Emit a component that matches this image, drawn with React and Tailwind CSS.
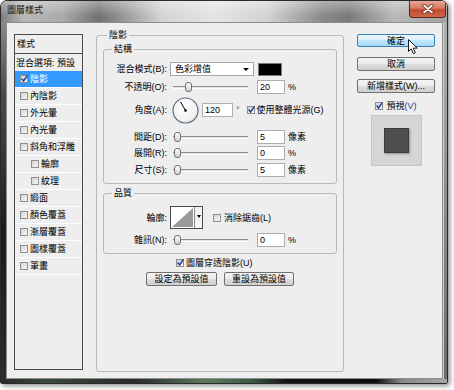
import React from 'react';

const Check = ({ checked }) => (
  <span className="relative inline-block w-[8px] h-[8px] shrink-0 border border-[#8f8f8f] bg-[linear-gradient(135deg,#d2d2d2,#f8f8f8)]">
    {checked && (
      <svg className="absolute left-[-1px] top-[-2px]" width="9" height="9" viewBox="0 0 9 9">
        <path d="M1.6 4.6 L3.6 7 L7.4 1.4" fill="none" stroke="#22409a" strokeWidth="1.5" />
      </svg>
    )}
  </span>
);

const Slider = ({ pos }) => (
  <div className="relative w-[75px] h-[10px] shrink-0 flex items-center">
    <div className="w-full h-[3px] border-t border-[#8e8e8e] border-b border-b-white bg-[#e2e2e2]" />
    <div
      className="absolute top-0 w-[7px] h-[10px] rounded-[3px] border border-[#6f6f6f] bg-[linear-gradient(#ffffff,#cfcfcf)]"
      style={{ left: pos }}
    />
  </div>
);

const Field = ({ value, w = 'w-[28px]' }) => (
  <div className={`${w} h-[14px] shrink-0 bg-white border border-[#abadb3] pl-[2px] text-[9px] leading-[12px]`}>
    {value}
  </div>
);

const Label = ({ children }) => (
  <div className="w-[63px] shrink-0 text-right text-[9px] leading-[12px]">{children}</div>
);

const SliderRow = ({ label, pos, value, unit, cls }) => (
  <div className={`flex items-center h-[16px] ${cls}`}>
    <Label>{label}</Label>
    <div className="ml-[6px]">
      <Slider pos={pos} />
    </div>
    <div className="ml-[9px]">
      <Field value={value} />
    </div>
    <div className="ml-[3px] text-[9px] leading-[12px]">{unit}</div>
  </div>
);

const Btn = ({ children, cls }) => (
  <div
    className={`h-[14px] flex items-center justify-center border border-[#707070] rounded-[2px] bg-[linear-gradient(#f4f4f4_0%,#ebebeb_50%,#dddddd_50%,#cfcfcf_100%)] text-[9px] leading-[12px] ${cls}`}
  >
    {children}
  </div>
);

const items = [
  { t: '陰影', c: true, sel: true },
  { t: '內陰影' },
  { t: '外光暈' },
  { t: '內光暈' },
  { t: '斜角和浮雕' },
  { t: '輪廓', sub: true },
  { t: '紋理', sub: true },
  { t: '緞面' },
  { t: '顏色覆蓋' },
  { t: '漸層覆蓋' },
  { t: '圖樣覆蓋' },
  { t: '筆畫' },
];

export default function App() {
  return (
    <div className="w-[454px] h-[390px] bg-white text-black font-['Liberation_Sans','Noto_Sans_CJK_TC',sans-serif]">
      <div className="w-[448px] h-[384px] flex flex-col rounded-t-[7px] rounded-b-[2px] border border-[#2b2b2b] shadow-[2px_2px_5px_rgba(0,0,0,0.45)] overflow-hidden">
        {/* title bar */}
        <div className="h-[21px] shrink-0 flex items-start justify-between pr-[1px] bg-[linear-gradient(180deg,rgba(255,255,255,0.35),rgba(255,255,255,0)_70%),linear-gradient(90deg,#7d7d7d_0%,#b8b8b8_5%,#a8a8a8_14%,#727272_22%,#9c9c9c_28%,#d4d4d4_36%,#e4e4e4_48%,#d2d2d2_60%,#8a8a8a_72%,#7a7a7a_78%,#b8b8b8_88%,#a2a2a2_100%)]">
          <div className="pl-[6px] pt-[3px] text-[9px] leading-[12px] text-[#141414]">圖層樣式</div>
          <div className="w-[37px] h-[17px] rounded-b-[4px] border border-t-0 border-[#5e2216] bg-[linear-gradient(#e9a895_0%,#d87a63_45%,#c4472b_55%,#d26a4c_100%)] flex items-center justify-center">
            <svg width="12" height="10" viewBox="0 0 12 10">
              <path d="M2 1.5 L10 8.5 M10 1.5 L2 8.5" stroke="#5a2013" strokeWidth="3.4" strokeLinecap="round" />
              <path d="M2 1.5 L10 8.5 M10 1.5 L2 8.5" stroke="#ffffff" strokeWidth="1.8" strokeLinecap="round" />
            </svg>
          </div>
        </div>

        {/* middle */}
        <div className="flex flex-1 min-h-0">
          <div className="w-[5px] shrink-0 bg-[linear-gradient(180deg,#8a8a8a,#4a4a4a_20%,#1c1c1c_60%,#2c2c2c)]" />
          {/* client */}
          <div className="flex-1 flex items-start border border-[#8d8d8d] bg-[#eeeeee]">
            {/* left list */}
            <div className="ml-[7px] mt-[11px] w-[69px] h-[336px] shrink-0 border border-[#4a4a4a] flex flex-col text-[9px] leading-[12px]">
              <div className="h-[19px] border-b border-[#4a4a4a] pl-[2px] flex items-center">樣式</div>
              <div className="h-[17px] pl-[1px] flex items-center whitespace-nowrap">混合選項: 預設</div>
              {items.map((it) => (
                <div
                  key={it.t}
                  className={`h-[17px] flex items-center border-b border-white ${it.sel ? 'bg-[#3399ff] text-white' : ''} ${it.sub ? 'pl-[16px]' : 'pl-[5px]'}`}
                >
                  <Check checked={it.c} />
                  <span className="ml-[2px] whitespace-nowrap">{it.t}</span>
                </div>
              ))}
            </div>

            {/* main */}
            <fieldset className="ml-[13px] mt-[6px] w-[248px] h-[343px] shrink-0 border border-[#b9b9b9] rounded-[3px]">
              <legend className="ml-[10px] px-[2px] text-[9px] leading-[12px]">陰影</legend>
              <div className="px-[6px] pt-[2px] flex flex-col">
                {/* 結構 */}
                <fieldset className="border border-[#b9b9b9] rounded-[3px]">
                  <legend className="ml-[8px] px-[2px] text-[9px] leading-[12px]">結構</legend>
                  <div className="pt-[6px] pb-[5px] flex flex-col">
                    <div className="flex items-center h-[16px]">
                      <Label>混合模式(B):</Label>
                      <div className="ml-[3px] w-[84px] h-[14px] bg-white border border-[#a5a5a5] flex items-center justify-between pl-[4px] pr-[4px] text-[9px] leading-[12px]">
                        <span>色彩增值</span>
                        <span className="w-0 h-0 border-l-[3px] border-r-[3px] border-t-[3px] border-l-transparent border-r-transparent border-t-black" />
                      </div>
                      <div className="ml-[4px] w-[24px] h-[13px] bg-black border border-[#7a7a7a]" />
                    </div>
                    <SliderRow label="不透明(O):" pos={12} value="20" unit="%" cls="mt-[2px]" />
                    <div className="flex items-center h-[26px] mt-[2px]">
                      <Label>角度(A):</Label>
                      <svg className="ml-[5px] shrink-0" width="27" height="27" viewBox="0 0 27 27">
                        <defs>
                          <radialGradient id="dg" cx="45%" cy="40%" r="65%">
                            <stop offset="0" stopColor="#ffffff" />
                            <stop offset="0.75" stopColor="#f2f2f2" />
                            <stop offset="1" stopColor="#d0d4d8" />
                          </radialGradient>
                        </defs>
                        <circle cx="13.5" cy="13.5" r="12.5" fill="url(#dg)" stroke="#5f6d7a" strokeWidth="1.2" />
                        <line x1="13.5" y1="13.5" x2="8.6" y2="5" stroke="#000" strokeWidth="1" />
                        <circle cx="13.5" cy="13.5" r="1.3" fill="#000" />
                      </svg>
                      <div className="ml-[3px]">
                        <Field value="120" w="w-[31px]" />
                      </div>
                      <div className="ml-[3px] text-[9px] leading-[12px] text-[#555]">°</div>
                      <div className="ml-[7px] flex items-center">
                        <Check checked />
                      </div>
                      <div className="ml-[2px] text-[9px] leading-[12px] whitespace-nowrap">使用整體光源(G)</div>
                    </div>
                    <SliderRow label="間距(D):" pos={1} value="5" unit="像素" cls="mt-[6px]" />
                    <SliderRow label="展開(R):" pos={1} value="0" unit="%" cls="" />
                    <SliderRow label="尺寸(S):" pos={1} value="5" unit="像素" cls="mt-[1px]" />
                  </div>
                </fieldset>

                {/* 品質 */}
                <fieldset className="mt-[3px] border border-[#b9b9b9] rounded-[3px]">
                  <legend className="ml-[8px] px-[2px] text-[9px] leading-[12px]">品質</legend>
                  <div className="pt-[7px] pb-[5px] flex flex-col">
                    <div className="flex items-center h-[23px]">
                      <Label>輪廓:</Label>
                      <div className="ml-[3px] flex h-[23px] shrink-0 border border-[#4a4a4a] bg-white">
                        <svg width="23" height="21" viewBox="0 0 23 21">
                          <rect width="23" height="21" fill="#ffffff" />
                          <polygon points="1,20 22,1 22,20" fill="#9a9a9a" />
                        </svg>
                        <div className="w-[8px] border-l border-[#8a8a8a] bg-[#f2f2f2] flex justify-center pt-[8px]">
                          <span className="w-0 h-0 border-l-[2.5px] border-r-[2.5px] border-t-[3px] border-l-transparent border-r-transparent border-t-black" />
                        </div>
                      </div>
                      <div className="ml-[10px] flex items-center">
                        <Check />
                      </div>
                      <div className="ml-[3px] text-[9px] leading-[12px] whitespace-nowrap">消除鋸齒(L)</div>
                    </div>
                    <SliderRow label="雜訊(N):" pos={1} value="0" unit="%" cls="mt-[3px]" />
                  </div>
                </fieldset>

                <div className="mt-[2px] h-[14px] flex items-center pl-[73px]">
                  <Check checked />
                  <span className="ml-[2px] text-[9px] leading-[12px] whitespace-nowrap">圖層穿透陰影(U)</span>
                </div>
                <div className="mt-[2px] flex justify-center gap-[7px]">
                  <Btn cls="w-[71px]">設定為預設值</Btn>
                  <Btn cls="w-[70px]">重設為預設值</Btn>
                </div>
              </div>
            </fieldset>

            {/* right column */}
            <div className="ml-[13px] mt-[11px] w-[78px] shrink-0 flex flex-col relative">
              <div className="h-[13px] flex items-center justify-center border border-[#3c7fb1] rounded-[2px] bg-[linear-gradient(#eaf6fd_0%,#d9f0fc_50%,#bee6fd_50%,#a7d9f5_100%)] text-[9px] leading-[12px]">
                確定
              </div>
              <Btn cls="mt-[10px] h-[13px]">取消</Btn>
              <Btn cls="mt-[8px] h-[13px] whitespace-nowrap">新增樣式(W)...</Btn>
              <div className="mt-[7px] h-[12px] flex items-center justify-center gap-[3px]">
                <Check checked />
                <span className="text-[9px] leading-[12px]">
                  預視<span className="text-[#2d3a9a]">(V)</span>
                </span>
              </div>
              <div className="mt-[3px] mx-auto w-[51px] h-[51px] border border-[#c6c6c6] bg-[#d5d5d5] flex items-center justify-center">
                <div className="w-[25px] h-[25px] bg-[#4f4f4f] border border-[#3a3a3a] shadow-[1px_1px_2px_rgba(0,0,0,0.35)]" />
              </div>
              {/* cursor */}
              <svg className="absolute left-[51px] top-[5px]" width="11" height="16" viewBox="0 0 11 16">
                <path d="M0.5 0.5 L0.5 12.5 L3.3 9.8 L5.3 14.6 L7.3 13.8 L5.3 9.1 L9.2 9.1 Z" fill="#ffffff" stroke="#000" strokeWidth="0.9" strokeLinejoin="round" />
              </svg>
            </div>
          </div>
          <div className="w-[4px] shrink-0 bg-[linear-gradient(180deg,#b0b0b0,#8c8c8c_50%,#6a6a6a)] border-l border-[#cfcfcf]" />
        </div>

        {/* bottom frame */}
        <div className="h-[4px] shrink-0 bg-[linear-gradient(90deg,#2a2a2a,#3a4a3a_10%,#2a2a2a_30%,#5c7a5e_46%,#3d5a45_56%,#141414_64%,#0d0d0d_84%,#8a8a8a_90%,#a6a6a6)]" />
      </div>
    </div>
  );
}
